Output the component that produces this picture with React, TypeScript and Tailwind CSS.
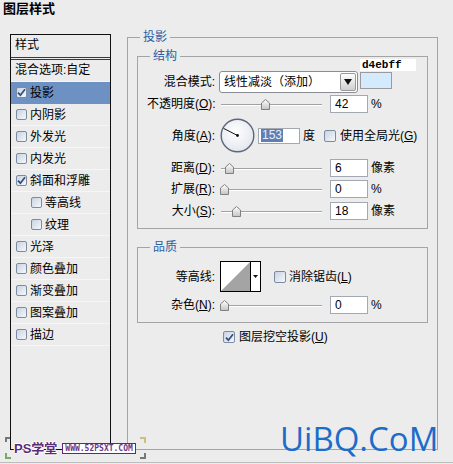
import type { ReactNode } from 'react'

interface CheckProps {
	checked?: boolean
	size?: 'sm' | 'md'
}

const Check = ({ checked, size = 'md' }: CheckProps) => (
	<span
		className={
			(size === 'sm' ? 'h-[11px] w-[11px] ' : 'h-[12px] w-[12px] ') +
			'inline-flex shrink-0 items-center justify-center rounded-[2px] border border-[#7d8ba0] bg-linear-to-br from-[#c9d3e2] to-[#f6f8fb]'
		}
	>
		{checked && (
			<svg width="9" height="9" viewBox="0 0 9 9">
				<path
					d="M1 4.6 L3.4 7.2 L8 1.2"
					fill="none"
					stroke="#2d4f80"
					strokeWidth="1.7"
				/>
			</svg>
		)}
	</span>
)

interface LabelProps {
	text: string
	hot?: string
}

const Label = ({ text, hot }: LabelProps) => (
	<span className="inline-block w-[68px] shrink-0 whitespace-nowrap text-right">
		{text}
		{hot && (
			<>
				(<u>{hot}</u>)
			</>
		)}
		:
	</span>
)

const Thumb = () => (
	<svg width="9" height="11" viewBox="0 0 9 11">
		<defs>
			<linearGradient id="thumb" x1="0" y1="0" x2="0" y2="1">
				<stop offset="0" stopColor="#ffffff" />
				<stop offset="1" stopColor="#c4c4c4" />
			</linearGradient>
		</defs>
		<polygon
			points="0.5,4 4.5,0.5 8.5,4 8.5,10.5 0.5,10.5"
			fill="url(#thumb)"
			stroke="#808080"
		/>
	</svg>
)

const Slider = ({ at }: { at: number }) => (
	<div className="relative ml-[6px] h-[13px] w-[101px]">
		<div className="absolute left-0 right-0 top-[6px] h-[2px] border-t border-b border-t-[#a2a2a2] border-b-white" />
		<div className="absolute top-[1px] flex" style={{ left: at }}>
			<Thumb />
		</div>
	</div>
)

const Field = ({ children }: { children: ReactNode }) => (
	<div className="h-[18px] w-[38px] shrink-0 border border-[#a3a9b2] bg-white pl-[4px] leading-[16px]">
		{children}
	</div>
)

interface SliderRowProps {
	label: string
	hot: string
	at: number
	value: string
	unit: string
	className: string
}

const SliderRow = ({ label, hot, at, value, unit, className }: SliderRowProps) => (
	<div className={'flex h-[18px] items-center ' + className}>
		<Label text={label} hot={hot} />
		<Slider at={at} />
		<div className="ml-[8px]">
			<Field>{value}</Field>
		</div>
		<span className="ml-[3px]">{unit}</span>
	</div>
)

const Dial = () => (
	<svg width="35" height="35" viewBox="0 0 35 35">
		<defs>
			<radialGradient id="dial" cx="0.45" cy="0.4" r="0.6">
				<stop offset="0" stopColor="#ffffff" />
				<stop offset="1" stopColor="#e3e7ee" />
			</radialGradient>
		</defs>
		<circle cx="17.5" cy="17.5" r="16.3" fill="url(#dial)" stroke="#5d677a" strokeWidth="1.4" />
		<line x1="17.5" y1="17.5" x2="3.6" y2="10.4" stroke="#111" strokeWidth="1" />
		<circle cx="17.5" cy="17.5" r="1.4" fill="#111" />
	</svg>
)

const styleItems = [
	{ label: '投影', checked: true, selected: true },
	{ label: '内阴影' },
	{ label: '外发光' },
	{ label: '内发光' },
	{ label: '斜面和浮雕', checked: true },
	{ label: '等高线', sub: true },
	{ label: '纹理', sub: true },
	{ label: '光泽' },
	{ label: '颜色叠加' },
	{ label: '渐变叠加' },
	{ label: '图案叠加' },
	{ label: '描边' }
]

const StyleList = () => (
	<div className="ml-[10px] mt-[14px] h-[416px] w-[101px] shrink-0 border border-[#111]">
		<div className="h-[25px] border-b-[3px] border-double border-[#3a3a3a] pl-[4px] leading-[21px]">
			样式
		</div>
		<div className="h-[22px] border-b border-[#f6f6f6] pl-[4px] leading-[21px]">
			混合选项:自定
		</div>
		{styleItems.map((item) => (
			<div
				key={item.label}
				className={
					'flex h-[22px] items-center gap-[3px] border-b ' +
					(item.selected ? 'border-[#6e91c3] bg-[#6e91c3] ' : 'border-[#f6f6f6] ') +
					(item.sub ? 'pl-[20px]' : 'pl-[5px]')
				}
			>
				<Check checked={item.checked} size="sm" />
				<span>{item.label}</span>
			</div>
		))}
	</div>
)

const Watermark = () => (
	<div className="absolute left-[5px] top-[437px] h-[22px] w-[141px]">
		<span className="absolute left-0 top-0 h-[5px] w-[5px] border-l-2 border-t-2 border-[#777]" />
		<span className="absolute bottom-0 left-0 h-[6px] w-[6px] border-b-2 border-l-2 border-[#7aa86a]" />
		<span className="absolute right-0 top-0 h-[6px] w-[6px] border-r-2 border-t-2 border-[#c8c27a]" />
		<span className="absolute bottom-0 right-0 h-[6px] w-[6px] border-b-2 border-r-2 border-[#777]" />
		<div className="flex items-center gap-[5px] pl-[9px] pt-[5px]">
			<span className="text-[13px] font-bold leading-[13px] text-[#5c2c78] [text-shadow:1px_0_#fff,-1px_0_#fff,0_1px_#fff,0_-1px_#fff]">
				PS学堂
			</span>
			<span className="border border-[#5c2c78] bg-white px-[2px] font-['DejaVu_Sans_Mono',monospace] text-[8px] font-bold leading-[9px] text-[#6a3a88]">
				WWW.52PSXT.COM
			</span>
		</div>
	</div>
)

export default function App() {
	return (
		<div className="relative flex h-[464px] w-[453px] flex-col overflow-hidden bg-[#ececec] font-['Liberation_Sans','Noto_Sans_CJK_SC',sans-serif] text-[12px] leading-[16px] text-black">
			<div className="h-[20px] pl-[3px] pt-[1px] text-[13px] font-bold leading-[16px]">
				图层样式
			</div>

			<div className="flex">
				<StyleList />

				<fieldset className="ml-[16px] mt-[9px] h-[421px] w-[311px] shrink-0 border border-[#a4a4a4] px-[9px] pt-[3px]">
					<legend className="ml-[3px] px-[3px] leading-[16px] text-[#2a5ea6]">投影</legend>

					<fieldset className="h-[181px] border border-[#a4a4a4] px-[9px]">
						<legend className="ml-[3px] px-[3px] leading-[16px] text-[#2a5ea6]">结构</legend>

						<div className="-mt-[5px] flex items-start">
							<div className="mt-[15px] flex">
								<Label text="混合模式" />
							</div>
							<div className="ml-[4px] mt-[12px] flex h-[22px] w-[139px] items-center rounded-[3px] border border-[#8a8d93] bg-white">
								<span className="flex-1 pl-[4px]">线性减淡（添加）</span>
								<span className="mr-px flex h-[18px] w-[16px] items-center justify-center rounded-[2px] border border-[#9a9a9a] bg-linear-to-b from-white to-[#cfcfcf]">
									<svg width="8" height="6" viewBox="0 0 8 6">
										<polygon points="0,0 8,0 4,6" fill="#111" />
									</svg>
								</span>
							</div>
							<div className="ml-[2px] flex flex-col">
								<div className="h-[12px] w-[56px] bg-white pl-[2px] font-['Liberation_Mono',monospace] text-[11px] font-bold leading-[12px]">
									d4ebff
								</div>
								<div className="mt-px h-[17px] w-[32px] border border-[#9a9a9a] bg-[#d4ebff]" />
							</div>
						</div>

						<SliderRow label="不透明度" hot="O" at={40} value="42" unit="%" className="mt-[2px]" />

						<div className="mt-[5px] flex h-[35px] items-center">
							<Label text="角度" hot="A" />
							<div className="ml-[5px] flex">
								<Dial />
							</div>
							<div className="ml-[3px] flex h-[16px] w-[42px] items-center border border-[#a3a9b2] bg-white pl-[2px]">
								<span className="bg-[#5c80b6] px-px leading-[13px] text-[#e9eef7]">153</span>
							</div>
							<span className="ml-[3px]">度</span>
							<span className="ml-[9px] flex">
								<Check />
							</span>
							<span className="ml-[4px]">
								使用全局光(<u>G</u>)
							</span>
						</div>

						<SliderRow label="距离" hot="D" at={4} value="6" unit="像素" className="mt-[6px]" />
						<SliderRow label="扩展" hot="R" at={-1} value="0" unit="%" className="mt-[3px]" />
						<SliderRow label="大小" hot="S" at={11} value="18" unit="像素" className="mt-[4px]" />
					</fieldset>

					<fieldset className="mt-[10px] h-[84px] border border-[#a4a4a4] px-[9px]">
						<legend className="ml-[3px] px-[3px] leading-[16px] text-[#2a5ea6]">品质</legend>

						<div className="mt-[6px] flex h-[31px] items-center">
							<Label text="等高线" />
							<div className="ml-[5px] flex h-[31px] w-[41px] border border-black bg-white">
								<svg width="29" height="29" viewBox="0 0 29 29">
									<polygon points="0,29 29,0 29,29" fill="#a4a4a4" />
								</svg>
								<div className="flex flex-1 items-center justify-center border-l border-black">
									<svg width="5" height="3" viewBox="0 0 5 3">
										<polygon points="0,0 5,0 2.5,3" fill="#111" />
									</svg>
								</div>
							</div>
							<span className="ml-[13px] flex">
								<Check />
							</span>
							<span className="ml-[3px]">
								消除锯齿(<u>L</u>)
							</span>
						</div>

						<SliderRow label="杂色" hot="N" at={-1} value="0" unit="%" className="mt-[4px]" />
					</fieldset>

					<div className="ml-[86px] mt-[7px] flex h-[14px] items-center gap-[4px]">
						<Check checked />
						<span>
							图层挖空投影(<u>U</u>)
						</span>
					</div>
				</fieldset>
			</div>

			<div className="mb-px mt-auto h-px bg-[#bdbdbd]" />

			<Watermark />

			<div className="absolute left-[280px] top-[422px] font-['Open_Sans',sans-serif] text-[33px] leading-[33px] text-[#1c6cc9]">
				UiBQ.CoM
			</div>
		</div>
	)
}
